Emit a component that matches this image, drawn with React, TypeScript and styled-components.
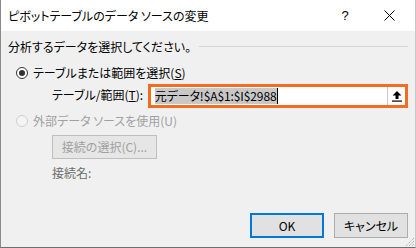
import React from "react";
import styled, { createGlobalStyle } from "styled-components";

const GlobalStyle = createGlobalStyle`
  html, body {
    margin: 0;
    padding: 0;
    background: #f0f0f0;
  }
  body {
    font-family: "Noto Sans CJK JP", "Noto Sans", sans-serif;
    font-feature-settings: "palt";
  }
`;

const Dialog = styled.div`
  width: 416px;
  height: 248px;
  box-sizing: border-box;
  display: flex;
  flex-direction: column;
  background: #f0f0f0;
  border-left: 1px solid #8a8a8a;
  border-right: 1px solid #c8c8c8;
  border-bottom: 1px solid #6f6f6f;
  position: relative;
  overflow: hidden;
  color: #000;
  font-size: 12px;
`;

const TitleBar = styled.div`
  height: 31px;
  flex: none;
  background: #fff;
  display: flex;
  align-items: center;
  padding-left: 7px;
`;

const Title = styled.div`
  flex: 1;
  font-size: 12px;
  line-height: 16px;
`;

const TitleButton = styled.div<{ $w: number }>`
  width: ${(p) => p.$w}px;
  height: 31px;
  display: flex;
  align-items: center;
  justify-content: center;
  font-family: "Liberation Sans", sans-serif;
  font-size: 13px;
`;

const Body = styled.div`
  flex: 1;
  display: flex;
  flex-direction: column;
  padding: 8px 7px 0 7px;
`;

const SectionHeader = styled.div`
  display: flex;
  align-items: center;
  gap: 8px;
  height: 16px;
  line-height: 16px;
`;

const Rule = styled.div`
  flex: 1;
  height: 1px;
  background: #d5d5d5;
  margin-top: -2px;
`;

const RadioRow = styled.label<{ $top: number; $disabled?: boolean }>`
  display: flex;
  align-items: center;
  gap: 5px;
  height: 16px;
  line-height: 16px;
  margin-top: ${(p) => p.$top}px;
  padding-left: 8px;
  color: ${(p) => (p.$disabled ? "#a0a0a0" : "#000")};
`;

const RadioDot = styled.span<{ $checked?: boolean; $disabled?: boolean }>`
  width: 12px;
  height: 12px;
  box-sizing: border-box;
  border-radius: 50%;
  border: 1px solid ${(p) => (p.$disabled ? "#cfcfcf" : "#333")};
  background: ${(p) => (p.$disabled ? "#f4f4f4" : "#fff")};
  display: flex;
  align-items: center;
  justify-content: center;
  &::after {
    content: "";
    width: 6px;
    height: 6px;
    border-radius: 50%;
    background: #333;
    display: ${(p) => (p.$checked ? "block" : "none")};
  }
`;

const Underline = styled.span`
  text-decoration: underline;
`;

const RangeRow = styled.div`
  display: flex;
  align-items: center;
  margin-top: 3px;
  padding-left: 44px;
  height: 24px;
`;

const FieldLabel = styled.div`
  width: 96px;
  line-height: 16px;
  margin-top: -3px;
`;

const FieldBox = styled.div`
  width: 261px;
  height: 24px;
  box-sizing: border-box;
  border: 3px solid #f36c21;
  background: #fff;
  display: flex;
  align-items: center;
`;

const FieldText = styled.div`
  flex: 1;
  display: flex;
  align-items: center;
  padding-left: 4px;
  height: 100%;
`;

const Selected = styled.span`
  background: #c8c8c8;
  line-height: 16px;
  height: 16px;
  border-right: 1px solid #000;
  letter-spacing: -0.1px;
`;

const CollapseButton = styled.div`
  width: 18px;
  height: 18px;
  box-sizing: border-box;
  border-left: 1px solid #c8c8c8;
  background: #fff;
  display: flex;
  align-items: center;
  justify-content: center;
  margin-right: 0;
`;

const IndentBlock = styled.div`
  display: flex;
  flex-direction: column;
  align-items: flex-start;
  padding-left: 44px;
`;

const PushButton = styled.button<{ $primary?: boolean; $disabled?: boolean }>`
  font: inherit;
  font-size: 12px;
  width: ${(p) => (p.$disabled ? "105px" : "74px")};
  height: ${(p) => (p.$disabled ? "24px" : "25px")};
  padding: 0;
  box-sizing: border-box;
  background: ${(p) => (p.$disabled ? "#e6e6e6" : "#e1e1e1")};
  color: ${(p) => (p.$disabled ? "#a0a0a0" : "#000")};
  border: ${(p) => (p.$primary ? "2px solid #0078d7" : "1px solid #adadad")};
  border-color: ${(p) => (p.$disabled ? "#bfbfbf" : p.$primary ? "#0078d7" : "#adadad")};
  line-height: 16px;
`;

const ConnName = styled.div`
  margin-top: 6px;
  height: 16px;
  line-height: 16px;
  color: #6d6d6d;
`;

const Footer = styled.div`
  margin-top: auto;
  display: flex;
  justify-content: flex-end;
  gap: 10px;
  padding: 0 0 9px 0;
`;

const Grip = styled.svg`
  position: absolute;
  right: 0;
  bottom: 0;
`;

export default function App() {
  return (
    <>
      <GlobalStyle />
      <Dialog>
        <TitleBar>
          <Title>ピボットテーブルのデータ ソースの変更</Title>
          <TitleButton $w={36}>?</TitleButton>
          <TitleButton $w={52}>
            <svg width="11" height="11" viewBox="0 0 11 11">
              <path d="M0.5 0.5 L10.5 10.5 M10.5 0.5 L0.5 10.5" stroke="#000" strokeWidth="1" />
            </svg>
          </TitleButton>
        </TitleBar>
        <Body>
          <SectionHeader>
            <span>分析するデータを選択してください。</span>
            <Rule />
          </SectionHeader>
          <RadioRow $top={10}>
            <RadioDot $checked />
            <span>
              テーブルまたは範囲を選択(<Underline>S</Underline>)
            </span>
          </RadioRow>
          <RangeRow>
            <FieldLabel>
              テーブル/範囲(<Underline>T</Underline>):
            </FieldLabel>
            <FieldBox>
              <FieldText>
                <Selected>元データ!$A$1:$I$2988</Selected>
              </FieldText>
              <CollapseButton>
                <svg width="10" height="11" viewBox="0 0 10 11">
                  <path d="M5 0 L9.5 4.5 L6.5 4.5 L6.5 8 L3.5 8 L3.5 4.5 L0.5 4.5 Z" fill="#000" />
                  <rect x="0" y="9.5" width="10" height="1.2" fill="#000" />
                </svg>
              </CollapseButton>
            </FieldBox>
          </RangeRow>
          <RadioRow $top={5} $disabled>
            <RadioDot $disabled />
            <span>外部データ ソースを使用(U)</span>
          </RadioRow>
          <IndentBlock>
            <PushButton $disabled style={{ marginTop: 6 }}>
              接続の選択(C)...
            </PushButton>
            <ConnName>接続名:</ConnName>
          </IndentBlock>
          <Footer>
            <PushButton $primary>OK</PushButton>
            <PushButton>キャンセル</PushButton>
          </Footer>
        </Body>
        <Grip width="12" height="12" viewBox="0 0 12 12">
          <path d="M11 3 L3 11 M11 6 L6 11 M11 9 L9 11" stroke="#9a9a9a" strokeWidth="1" strokeDasharray="1 1" />
        </Grip>
      </Dialog>
    </>
  );
}
